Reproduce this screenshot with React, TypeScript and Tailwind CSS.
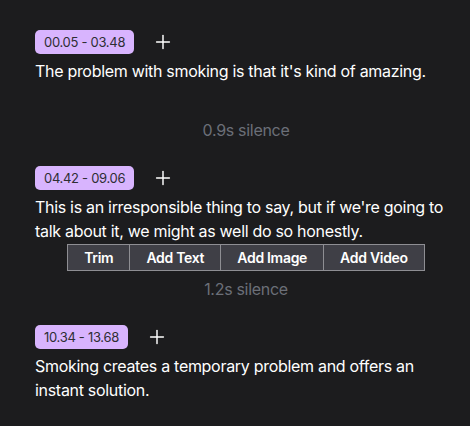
import { Plus } from "lucide-react";

type Segment = {
  start: string;
  end: string;
  text: string;
  silence?: string;
  toolbar?: boolean;
};

const segments: Segment[] = [
  {
    start: "00.05",
    end: "03.48",
    text: "The problem with smoking is that it's kind of amazing.",
    silence: "0.9s silence",
  },
  {
    start: "04.42",
    end: "09.06",
    text: "This is an irresponsible thing to say, but if we're going to talk about it, we might as well do so honestly.",
    silence: "1.2s silence",
    toolbar: true,
  },
  {
    start: "10.34",
    end: "13.68",
    text: "Smoking creates a temporary problem and offers an instant solution.",
  },
];

const actions = ["Trim", "Add Text", "Add Image", "Add Video"];

export default function App() {
  return (
    <div className="min-h-[426px] w-full bg-[#1c1c1e] pt-[30px] pl-[35px] pr-[13px] font-['Inter',sans-serif] tracking-[-0.3px] text-white">
      {segments.map((seg) => (
        <div key={seg.start}>
          <div className="flex items-center">
            <span className="rounded-[5px] bg-[#d8b4fe] px-[9px] py-[3px] text-[13px] leading-[18px] text-[#2e2e33]">
              {seg.start} - {seg.end}
            </span>
            <button className="ml-[18px] text-white">
              <Plus size={22} strokeWidth={1.6} />
            </button>
          </div>
          <p className="mt-[5px] text-[16px] leading-6">{seg.text}</p>
          {seg.toolbar && (
            <div className="mt-[1px] flex justify-center">
              <div className="flex border border-[#8e8e93] bg-[#3f3f46]">
                {actions.map((a, i) => (
                  <div
                    key={a}
                    className={
                      "px-[16px] text-[14px] font-semibold leading-[25px] " +
                      (i > 0 ? "border-l border-[#8e8e93]" : "")
                    }
                  >
                    {a}
                  </div>
                ))}
              </div>
            </div>
          )}
          {seg.silence && (
            <div
              className={
                "text-center text-[16px] leading-6 text-[#6b6f78] " +
                (seg.toolbar ? "mt-[6px] mb-[24px]" : "mt-[35px] mb-[24px]")
              }
            >
              {seg.silence}
            </div>
          )}
        </div>
      ))}
    </div>
  );
}
